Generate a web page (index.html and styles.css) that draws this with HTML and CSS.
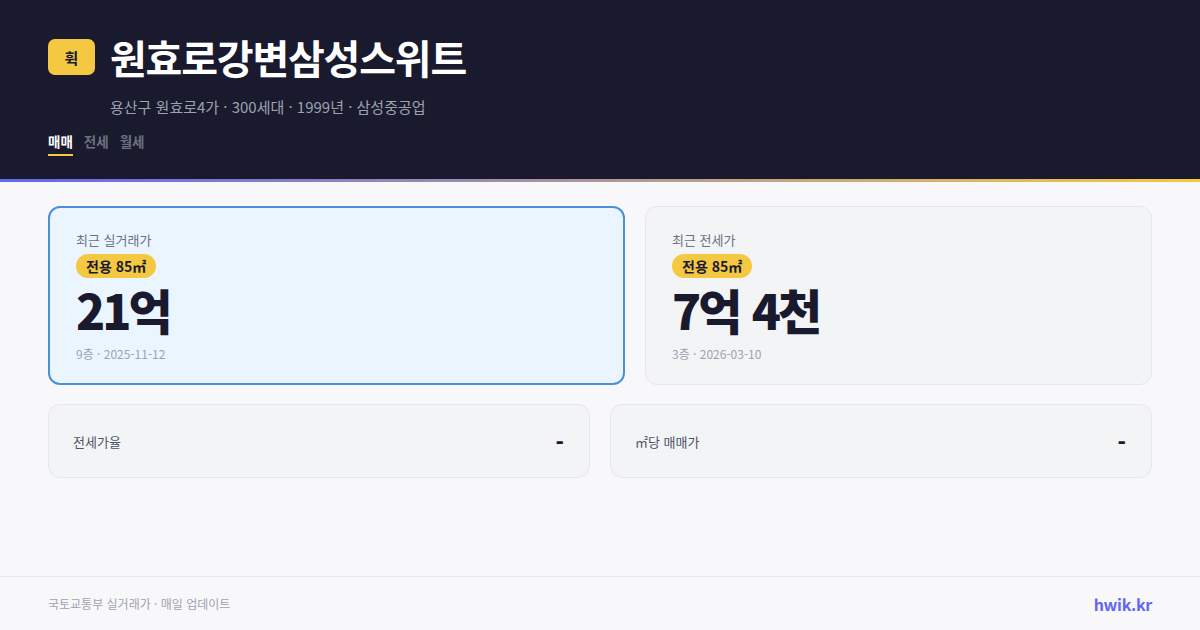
FILE: index.html
```html
<!DOCTYPE html>
<html lang="ko">
<head>
<meta charset="utf-8">
<link rel="stylesheet" href="styles.css">
</head>
<body>
<div class="page">
  <header class="hero">
    <div class="title-row">
      <div class="logo">휙</div>
      <h1 class="title">원효로강변삼성스위트</h1>
    </div>
    <div class="sub">용산구 원효로4가 · 300세대 · 1999년 · 삼성중공업</div>
    <nav class="tabs">
      <span class="tab active">매매</span>
      <span class="tab">전세</span>
      <span class="tab">월세</span>
    </nav>
  </header>
  <div class="accent"></div>
  <main class="content">
    <div class="cards">
      <section class="card card-main">
        <div class="card-label">최근 실거래가</div>
        <div class="pill">전용 85㎡</div>
        <div class="price">21억</div>
        <div class="meta">9층 · 2025-11-12</div>
      </section>
      <section class="card">
        <div class="card-label">최근 전세가</div>
        <div class="pill">전용 85㎡</div>
        <div class="price">7억 4천</div>
        <div class="meta">3층 · 2026-03-10</div>
      </section>
    </div>
    <div class="stats">
      <div class="stat"><span class="stat-label">전세가율</span><span class="stat-value">-</span></div>
      <div class="stat"><span class="stat-label">㎡당 매매가</span><span class="stat-value">-</span></div>
    </div>
  </main>
  <footer class="footer">
    <span class="src">국토교통부 실거래가 · 매일 업데이트</span>
    <span class="brand">hwik.kr</span>
  </footer>
</div>
</body>
</html>
```
FILE: styles.css
```css
* { box-sizing: border-box; margin: 0; padding: 0; }
html, body { width: 1200px; height: 630px; overflow: hidden; }
body {
  background: #f8f8fa;
  font-family: "Noto Sans CJK KR", "Noto Sans", sans-serif;
  color: #1a1a2e;
}
.page { display: flex; flex-direction: column; height: 630px; }
.hero {
  background: #1a1a2e;
  height: 179px;
  padding: 35px 48px 0;
}
.title-row { display: flex; align-items: center; gap: 15px; height: 44px; }
.logo {
  width: 47px; height: 36px;
  background: #f5c842;
  border-radius: 7px;
  display: flex; align-items: center; justify-content: center;
  font-size: 15px; font-weight: 700; color: #1a1a2e;
}
.title {
  font-size: 40px; font-weight: 700; color: #ffffff;
  letter-spacing: -1.2px; line-height: 44px;
}
.sub {
  margin: 17px 0 0 62px;
  font-size: 15px; color: #9ca3af; line-height: 22px;
}
.tabs { display: flex; gap: 11px; margin-top: 14px; }
.tab {
  font-size: 13.5px; font-weight: 700; color: #6b7280;
  line-height: 18px; padding-bottom: 4px;
  border-bottom: 2px solid transparent;
}
.tab.active { color: #ffffff; border-bottom-color: #f5c842; }
.accent { height: 3px; background: linear-gradient(90deg, #6366f1, #f5c842); }
.content { flex: 1; padding: 24px 48px 0; }
.cards { display: grid; grid-template-columns: 577fr 507fr; gap: 20px; }
.card {
  height: 179px;
  background: #f3f4f6;
  border: 1px solid #e5e7eb;
  border-radius: 12px;
  padding: 23px 26px 0;
}
.card-main { background: #ebf5ff; border: 2px solid #4a90d9; padding: 22px 26px 0; }
.card-label { font-size: 13px; color: #6b7280; line-height: 20px; }
.pill {
  width: fit-content; margin-top: 4px;
  background: #f5c842; color: #1a1a2e;
  font-size: 14px; font-weight: 700; line-height: 24px; height: 24px;
  padding: 0 10px; border-radius: 12px;
}
.price {
  font-size: 48px; font-weight: 900; color: #1a1a2e;
  letter-spacing: -3px; line-height: 56px; margin-top: 3px;
  word-spacing: 2px;
}
.meta { font-size: 12px; color: #9ca3af; line-height: 18px; margin-top: 8px; }
.stats { display: grid; grid-template-columns: 1fr 1fr; gap: 20px; margin-top: 19px; }
.stat {
  height: 74px;
  background: #f3f4f6; border: 1px solid #e5e7eb; border-radius: 12px;
  display: flex; align-items: center; justify-content: space-between;
  padding: 0 25px 0 24px;
}
.stat-label { font-size: 13px; color: #4b5563; }
.stat-value { font-size: 22px; font-weight: 900; color: #1a1a2e; }
.footer {
  height: 54px;
  border-top: 1px solid #e5e7eb;
  display: flex; align-items: center; justify-content: space-between;
  padding: 0 48px;
}
.src { font-size: 12px; color: #9ca3af; }
.brand { font-size: 16px; font-weight: 700; color: #6366f1; letter-spacing: -0.3px; }
```
